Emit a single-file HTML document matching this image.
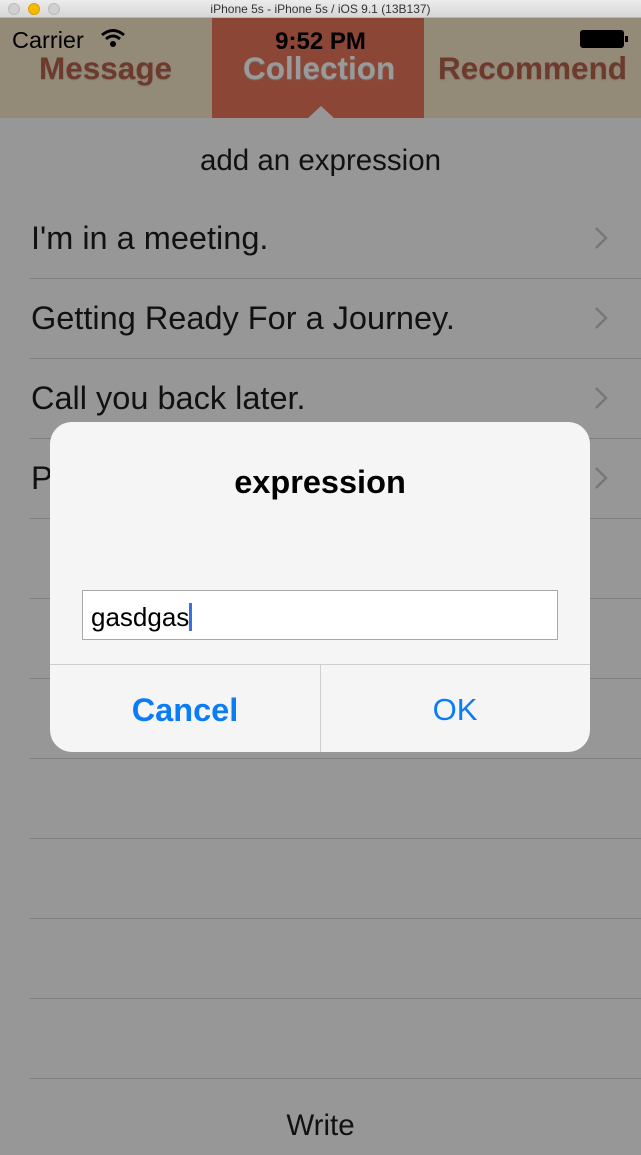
<!DOCTYPE html>
<html><head><meta charset="utf-8"><style>
*{margin:0;padding:0;box-sizing:border-box}
body{width:641px;height:1155px;overflow:hidden;background:#979797;font-family:"Liberation Sans",sans-serif;position:relative}
.tb{position:absolute;left:0;top:0;width:641px;height:18px;background:linear-gradient(#ececec,#d6d6d6);border-bottom:1px solid #b8b8b8;text-align:center;font-size:12px;line-height:18px;color:#333}
.dot{position:absolute;top:3px;width:12px;height:12px;border-radius:50%;background:#d0d0d0;border:1px solid #bbb}
.nav{position:absolute;top:18px;left:0;width:641px;height:100px;background:#938b78}
.mid{position:absolute;left:212px;top:18px;width:212px;height:100px;background:#8b4636}
.tab{position:absolute;top:50px;font-size:31.5px;font-weight:bold;color:#6e3a2b;text-shadow:0 1px 1px #777}
.sep{position:absolute;left:30px;right:0;height:1px;background:#7d7d7d}
.row{position:absolute;left:31px;font-size:32.5px;color:#111}
.chev{position:absolute;left:594px;width:14px;height:24px}
</style></head><body>
<div class="tb"><span class="dot" style="left:8px"></span><span class="dot" style="left:28px;background:#f5b900;border-color:#d9a000"></span><span class="dot" style="left:48px"></span>iPhone 5s - iPhone 5s / iOS 9.1 (13B137)</div>
<div class="nav"></div><div class="mid"></div>
<div style="position:absolute;left:12px;top:27px;font-size:23.5px;color:#000">Carrier</div>
<svg style="position:absolute;left:100px;top:28px" width="26" height="20" viewBox="0 0 26 20"><path d="M2 7 Q13 -2 24 7" stroke="#000" stroke-width="3" fill="none"/><path d="M6 11 Q13 5 20 11" stroke="#000" stroke-width="3" fill="none"/><circle cx="13" cy="16" r="3" fill="#000"/></svg>
<div style="position:absolute;left:0;width:641px;text-align:center;top:28px;font-size:24px;font-weight:bold;color:#000">9:52 PM</div>
<div style="position:absolute;left:580px;top:30px;width:44px;height:18px;border:1px solid #000;border-radius:3px;background:#000"></div>
<div style="position:absolute;left:625px;top:36px;width:3px;height:6px;background:#000"></div>
<div class="tab" style="left:39px">Message</div>
<div class="tab" style="left:243px;color:#9a9a9a">Collection</div>
<div class="tab" style="left:438px">Recommend</div>
<div style="position:absolute;left:307px;top:106px;width:0;height:0;border-left:14px solid transparent;border-right:14px solid transparent;border-bottom:13px solid #979797"></div>
<div style="position:absolute;left:0;width:641px;text-align:center;top:144px;font-size:29.5px;color:#111">add an expression</div>
<div class="row" style="top:220px">I'm in a meeting.</div>
<div class="row" style="top:300px">Getting Ready For a Journey.</div>
<div class="row" style="top:380px">Call you back later.</div>
<div class="row" style="top:460px">P</div>
<svg class="chev" style="top:226px" viewBox="0 0 14 24"><path d="M2 2 L12 12 L2 22" stroke="#777" stroke-width="2.5" fill="none"/></svg>
<svg class="chev" style="top:306px" viewBox="0 0 14 24"><path d="M2 2 L12 12 L2 22" stroke="#777" stroke-width="2.5" fill="none"/></svg>
<svg class="chev" style="top:386px" viewBox="0 0 14 24"><path d="M2 2 L12 12 L2 22" stroke="#777" stroke-width="2.5" fill="none"/></svg>
<svg class="chev" style="top:466px" viewBox="0 0 14 24"><path d="M2 2 L12 12 L2 22" stroke="#777" stroke-width="2.5" fill="none"/></svg>
<div class="sep" style="top:278px"></div><div class="sep" style="top:358px"></div><div class="sep" style="top:438px"></div><div class="sep" style="top:518px"></div><div class="sep" style="top:598px"></div><div class="sep" style="top:678px"></div><div class="sep" style="top:758px"></div><div class="sep" style="top:838px"></div><div class="sep" style="top:918px"></div><div class="sep" style="top:998px"></div><div class="sep" style="top:1078px"></div>
<div style="position:absolute;left:0;width:641px;text-align:center;top:1109px;font-size:29.5px;color:#111">Write</div>
<div style="position:absolute;left:50px;top:422px;width:540px;height:330px;border-radius:22px;background:#f5f5f5;overflow:hidden">
<div style="position:absolute;top:42px;width:100%;text-align:center;font-size:32.5px;font-weight:bold;color:#000">expression</div>
<div style="position:absolute;left:32px;top:168px;width:476px;height:50px;background:#fff;border:1px solid #aaa"></div>
<div style="position:absolute;left:41px;top:180px;font-size:26px;color:#000">gasdgas<span style="display:inline-block;width:3px;height:28px;background:#3a6fe0;vertical-align:-5px"></span></div>
<div style="position:absolute;left:0;top:242px;width:100%;height:1px;background:#cfcfcf"></div>
<div style="position:absolute;left:270px;top:242px;width:1px;height:88px;background:#cfcfcf"></div>
<div style="position:absolute;left:0;width:270px;top:270px;text-align:center;font-size:32.5px;font-weight:bold;color:#0a7cf6">Cancel</div>
<div style="position:absolute;left:270px;width:270px;top:270px;text-align:center;font-size:31px;color:#0a7cf6">OK</div>
</div>
</body></html>
